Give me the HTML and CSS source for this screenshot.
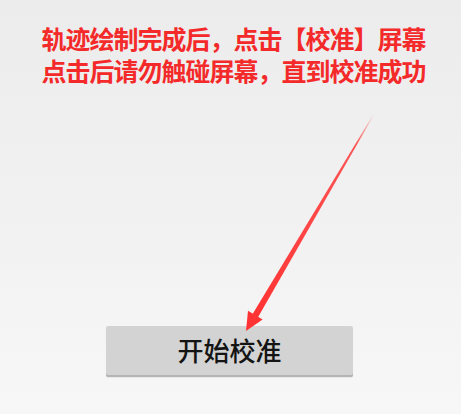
FILE: index.html
```html
<!DOCTYPE html>
<html lang="zh-CN">
<head>
<meta charset="utf-8">
<title>校准</title>
<link rel="stylesheet" href="styles.css">
</head>
<body>
<div class="screen">
  <div class="hint">
    <p class="hint-line">轨迹绘制完成后，点击【校准】屏幕</p>
    <p class="hint-line">点击后请勿触碰屏幕，直到校准成功</p>
  </div>
  <div class="spacer"></div>
  <div class="actions">
    <button class="start-btn" type="button">开始校准</button>
  </div>
  <svg class="arrow" width="461" height="414" viewBox="0 0 461 414" aria-hidden="true">
    <defs>
      <linearGradient id="fade" x1="374" y1="114" x2="255" y2="315" gradientUnits="userSpaceOnUse">
        <stop offset="0" stop-color="#ff3a3a" stop-opacity="0"/>
        <stop offset="0.15" stop-color="#ff3a3a" stop-opacity="0.85"/>
        <stop offset="1" stop-color="#ff3333" stop-opacity="1"/>
      </linearGradient>
    </defs>
    <polygon points="374.4,114.3 373.6,113.7 252.6,314 258,317.2" fill="url(#fade)"/>
    <polygon points="246,331 248,310.8 262.6,319.6" fill="#ff3333"/>
  </svg>
</div>
</body>
</html>
```
FILE: styles.css
```css
html, body {
  margin: 0;
  padding: 0;
}
body {
  width: 461px;
  height: 414px;
  overflow: hidden;
  font-family: "Noto Sans CJK SC", "Noto Sans", sans-serif;
}
.screen {
  position: relative;
  width: 461px;
  height: 414px;
  display: flex;
  flex-direction: column;
  background: linear-gradient(to bottom, #ececec 0%, #f1f1f1 50%, #f7f7f7 100%);
}
.hint {
  padding-top: 24px;
  padding-left: 6px;
  display: flex;
  flex-direction: column;
  align-items: center;
}
.hint-line {
  margin: 0;
  font-family: "Liberation Sans", "Noto Sans CJK SC", sans-serif;
  font-size: 25px;
  line-height: 32px;
  font-weight: 700;
  color: #f42a2a;
  white-space: nowrap;
  letter-spacing: -1px;
}
.spacer {
  flex: 1;
}
.actions {
  display: flex;
  justify-content: flex-start;
  padding-left: 106px;
  padding-bottom: 37px;
}
.start-btn {
  width: 247px;
  height: 51px;
  border: none;
  border-radius: 2px;
  background: #d3d3d3;
  box-shadow: inset 0 -2px 0 #b4b4b4, 0 1px 1px rgba(0,0,0,0.06);
  font-family: "Noto Sans CJK SC", "Noto Sans", sans-serif;
  font-size: 26px;
  font-weight: 500;
  color: #141414;
  padding: 0 0 3px 0;
  line-height: 1;
}
.arrow {
  position: absolute;
  left: 0;
  top: 0;
  pointer-events: none;
}
```
